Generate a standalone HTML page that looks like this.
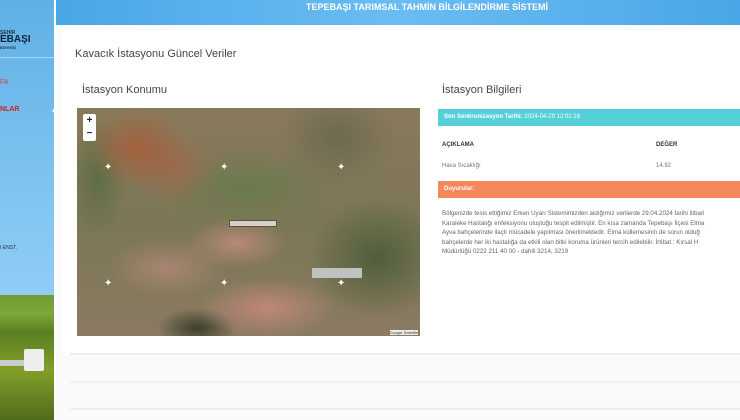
<!DOCTYPE html>
<html><head><meta charset="utf-8"><style>
*{margin:0;padding:0;box-sizing:border-box}
body{width:740px;height:420px;overflow:hidden;background:#fff;font-family:"Liberation Sans",sans-serif;position:relative}
.side{position:absolute;left:0;top:0;width:54px;height:420px;background:linear-gradient(180deg,#5fb0e6 0%,#7cc2f0 40%,#8fcdf5 70%,#9ad3f5 100%)}
.field{position:absolute;left:0;top:295px;width:54px;height:125px;background:linear-gradient(180deg,#6f9a34 0%,#7ea83a 15%,#5a7e22 30%,#829f2a 60%,#4f6c1c 100%)}
.hdr{position:absolute;left:56px;top:0;width:684px;height:25px;background:linear-gradient(90deg,#4aa6e6,#6bbcf2 50%,#4aa6e6);color:#fff;font-size:9px;font-weight:bold;line-height:13px}
.main{position:absolute;left:56px;top:25px;width:684px;height:395px;background:#fafafa}
.t{position:absolute;color:#444}
.map{position:absolute;left:77px;top:108px;width:343px;height:228px;overflow:hidden;
background:
radial-gradient(ellipse 50px 40px at 60px 40px,#a3613e,transparent),
radial-gradient(ellipse 45px 35px at 95px 60px,#9c6a4d,transparent),
radial-gradient(ellipse 30px 60px at 20px 70px,#5e6d45,transparent),
radial-gradient(ellipse 70px 30px at 190px 200px,#c0877a,transparent),
radial-gradient(ellipse 50px 25px at 160px 135px,#b78878,transparent),
radial-gradient(ellipse 60px 30px at 90px 160px,#a98472,transparent),
radial-gradient(ellipse 70px 60px at 300px 150px,#4f5e3b,transparent),
radial-gradient(ellipse 60px 50px at 260px 30px,#6d6a50,transparent),
radial-gradient(ellipse 90px 40px at 170px 80px,#6a7a4e,transparent),
radial-gradient(ellipse 40px 20px at 120px 220px,#3b3e2c,transparent),
linear-gradient(180deg,#8a7a5c,#7c7756 50%,#8a7a62)}
.star{position:absolute;color:#fff;font-size:10px;line-height:10px}
.sep{position:absolute;left:70px;width:670px;height:2px;background:#eee}
</style></head><body>
<div class="side">
<div style="position:absolute;left:0;top:30px;font-size:5px;color:#234;font-weight:bold">ŞEHİR</div>
<div style="position:absolute;left:0;top:34px;font-size:10px;color:#123;font-weight:bold">EBAŞI</div>
<div style="position:absolute;left:0;top:45px;font-size:4px;color:#234;font-weight:bold">EDİYESİ</div>
<div style="position:absolute;left:0;top:57px;width:54px;height:1px;background:#a8d6f5"></div>
<div style="position:absolute;left:0;top:79px;font-size:7px;color:#d44">FA</div>
<div style="position:absolute;left:0;top:106px;font-size:7px;color:#c22;font-weight:bold">NLAR</div>
<div style="position:absolute;left:47px;top:106px;width:0;height:0;border:5px solid transparent;border-right-color:#fff"></div>
<div style="position:absolute;left:0;top:245px;font-size:5px;color:#234">I ENST.</div>
<div class="field"></div>
<div style="position:absolute;left:24px;top:349px;width:20px;height:22px;background:#eee;border-radius:2px"></div>
<div style="position:absolute;left:0;top:360px;width:24px;height:6px;background:#ccc"></div>
</div>
<div class="hdr"><div style="position:absolute;left:250px;top:1px;white-space:nowrap">TEPEBAŞI TARIMSAL TAHMİN BİLGİLENDİRME SİSTEMİ</div></div>
<div class="main"></div>
<div style="position:absolute;left:62px;top:30px;width:678px;height:325px;background:#fff"></div>
<div class="t" style="left:75px;top:48px;font-size:11px">Kavacık İstasyonu Güncel Veriler</div>
<div class="t" style="left:82px;top:84px;font-size:11px">İstasyon Konumu</div>
<div class="t" style="left:442px;top:84px;font-size:11px">İstasyon Bilgileri</div>
<div class="map">
<div style="position:absolute;left:6px;top:6px;width:13px;height:27px;background:#fff;border-radius:2px;font-size:10px;font-weight:bold;text-align:center;line-height:13px;color:#222">+<br>−</div>
<div class="star" style="left:27px;top:55px">✦</div><div class="star" style="left:143px;top:55px">✦</div><div class="star" style="left:260px;top:55px">✦</div>
<div class="star" style="left:27px;top:171px">✦</div><div class="star" style="left:143px;top:171px">✦</div><div class="star" style="left:260px;top:171px">✦</div>
<div style="position:absolute;left:152px;top:112px;width:48px;height:7px;background:#d8d0c8;border:1px solid #554"></div>
<div style="position:absolute;left:235px;top:160px;width:50px;height:10px;background:#bfc3c0"></div>
<div style="position:absolute;right:2px;bottom:1px;font-size:4px;color:#333;background:#eee">Google Satellite</div>
</div>
<div style="position:absolute;left:438px;top:109px;width:302px;height:17px;background:#56d0d8;color:#fff;font-size:6px;line-height:17px;padding-left:6px"><b>Son Senkronizasyon Tarihi:</b> 2024-04-29 12:01:18</div>
<div class="t" style="left:442px;top:142px;font-size:6px;font-weight:bold;color:#333">AÇIKLAMA</div>
<div class="t" style="left:656px;top:142px;font-size:6px;font-weight:bold;color:#333">DEĞER</div>
<div class="t" style="left:442px;top:163px;font-size:6px;color:#777">Hava Sıcaklığı</div>
<div class="t" style="left:656px;top:163px;font-size:6px;color:#777">14.92</div>
<div style="position:absolute;left:438px;top:181px;width:302px;height:17px;background:#f4875c;color:#fff;font-size:6px;font-weight:bold;line-height:17px;padding-left:6px">Duyurular:</div>
<div class="t" style="left:442px;top:209px;font-size:6.2px;line-height:9.5px;color:#666;white-space:nowrap">Bölgenizde tesis ettiğimiz Erken Uyarı Sistemimizden aldığımız verilerde 29.04.2024 tarihi itibari<br>Karaleke Hastalığı enfeksiyonu oluştuğu tespit edilmiştir. En kısa zamanda Tepebaşı İlçesi Elma<br>Ayva bahçelerinde ilaçlı mücadele yapılması önerilmektedir. Elma küllemesinin de sorun olduğ<br>bahçelerde her iki hastalığa da etkili olan bitki koruma ürünleri tercih edilebilir. İrtibat : Kırsal H<br>Müdürlüğü 0222 211 40 00 - dahili 3214, 3219</div>
<div class="sep" style="top:353px"></div>
<div class="sep" style="top:381px"></div>
<div class="sep" style="top:408px"></div>
</body></html>
